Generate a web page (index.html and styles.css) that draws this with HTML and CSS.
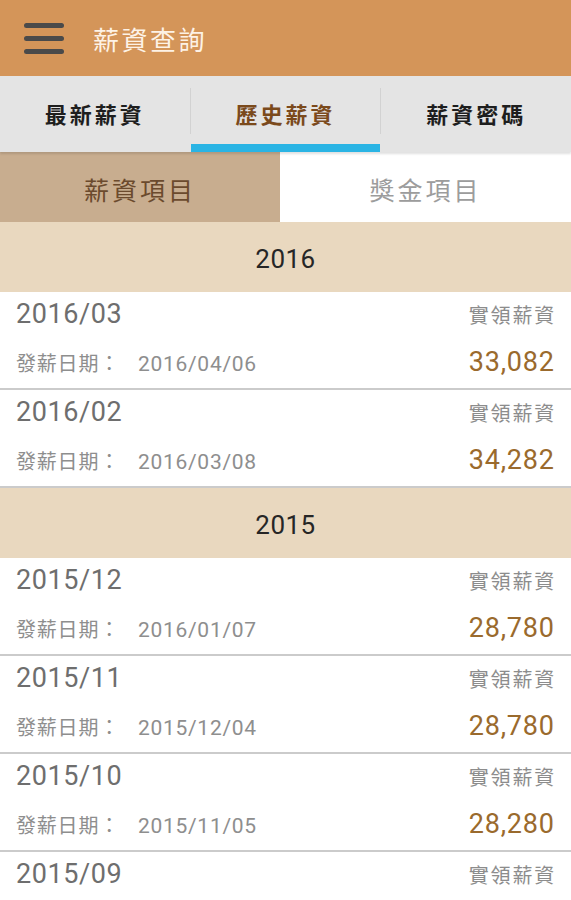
FILE: index.html
```html
<!DOCTYPE html>
<html lang="zh-Hant">
<head>
<meta charset="utf-8">
<title>薪資查詢</title>
<link rel="stylesheet" href="styles.css">
</head>
<body>
<div class="app">
  <header class="appbar">
    <svg class="menu" width="40" height="34" viewBox="0 0 40 34" aria-hidden="true">
      <rect x="0" y="2" width="40" height="5" rx="2.5" fill="#4a4a4a"/>
      <rect x="0" y="15" width="40" height="5" rx="2.5" fill="#4a4a4a"/>
      <rect x="0" y="28" width="40" height="5" rx="2.5" fill="#4a4a4a"/>
    </svg>
    <h1 class="title">薪資查詢</h1>
  </header>

  <nav class="tabs">
    <div class="tab">最新薪資</div>
    <div class="sep"></div>
    <div class="tab active">歷史薪資</div>
    <div class="sep"></div>
    <div class="tab">薪資密碼</div>
  </nav>

  <div class="subtabs">
    <div class="subtab on">薪資項目</div>
    <div class="subtab">獎金項目</div>
  </div>

  <div class="list">
    <div class="year">2016</div>
    <div class="row">
      <div class="month">2016/03</div><div class="label">實領薪資</div>
      <div class="paid"><span class="cap">發薪日期：</span>2016/04/06</div><div class="amount">33,082</div>
    </div>
    <div class="row">
      <div class="month">2016/02</div><div class="label">實領薪資</div>
      <div class="paid"><span class="cap">發薪日期：</span>2016/03/08</div><div class="amount">34,282</div>
    </div>

    <div class="year">2015</div>
    <div class="row">
      <div class="month">2015/12</div><div class="label">實領薪資</div>
      <div class="paid"><span class="cap">發薪日期：</span>2016/01/07</div><div class="amount">28,780</div>
    </div>
    <div class="row">
      <div class="month">2015/11</div><div class="label">實領薪資</div>
      <div class="paid"><span class="cap">發薪日期：</span>2015/12/04</div><div class="amount">28,780</div>
    </div>
    <div class="row">
      <div class="month">2015/10</div><div class="label">實領薪資</div>
      <div class="paid"><span class="cap">發薪日期：</span>2015/11/05</div><div class="amount">28,280</div>
    </div>
    <div class="row partial">
      <div class="month">2015/09</div><div class="label">實領薪資</div>
    </div>
  </div>
</div>
</body>
</html>
```

FILE: styles.css
```css
* { box-sizing: border-box; margin: 0; padding: 0; }

html, body {
  width: 571px;
  height: 900px;
  overflow: hidden;
  background: #ffffff;
}

body {
  font-family: Roboto, "Noto Sans CJK TC", "Noto Sans", sans-serif;
}

.app {
  display: flex;
  flex-direction: column;
  width: 571px;
}

/* App bar */
.appbar {
  height: 76px;
  background: #d49559;
  display: flex;
  align-items: center;
  padding-left: 24px;
  gap: 29px;
}

.menu { display: block; }

.title {
  font-size: 26px;
  font-weight: 400;
  letter-spacing: 2.5px;
  color: #fdf2e6;
}

/* Top tabs */
.tabs {
  height: 76px;
  background: #e4e4e4;
  display: flex;
  align-items: stretch;
  position: relative;
  z-index: 2;
  box-shadow: 0 2px 2px rgba(0, 0, 0, 0.12);
}

.tab {
  flex: 1;
  display: flex;
  align-items: center;
  justify-content: center;
  padding-top: 6px;
  border-bottom: 8px solid transparent;
  font-size: 22px;
  font-weight: 700;
  letter-spacing: 3px;
  color: #1e1e1e;
}

.tab.active {
  color: #7b4a1c;
  border-bottom-color: #2ab4e4;
}

.sep {
  width: 1px;
  align-self: center;
  height: 46px;
  margin-top: -6px;
  background: #d2d2d2;
}

/* Sub tabs */
.subtabs {
  display: grid;
  grid-template-columns: 280px 1fr;
  height: 70px;
}

.subtab {
  display: flex;
  align-items: center;
  justify-content: center;
  padding-top: 4px;
  font-size: 25px;
  letter-spacing: 3px;
  color: #9c9c9c;
  background: #ffffff;
}

.subtab.on {
  background: #c8ad8f;
  color: #6b4a2d;
}

/* List */
.year {
  height: 70px;
  background: #e9d8bf;
  display: flex;
  align-items: center;
  justify-content: center;
  padding-top: 4px;
  font-size: 26px;
  letter-spacing: 0.5px;
  color: #262626;
}

.row {
  height: 98px;
  background: #ffffff;
  border-bottom: 2px solid #cbcbcb;
  display: grid;
  grid-template-columns: 1fr auto;
  grid-template-rows: 44px 52px;
  padding: 0 17px 0 16px;
  align-items: center;
}

.row.partial {
  height: 48px;
  border-bottom: 0;
  grid-template-rows: 44px;
}

.month {
  font-size: 27px;
  letter-spacing: 0.6px;
  color: #6e6e6e;
}

.label {
  font-size: 20px;
  letter-spacing: 1.8px;
  color: #8c8c8c;
  margin-right: -2px;
}

.paid {
  font-size: 21px;
  letter-spacing: 0.7px;
  color: #8e8e8e;
}

.cap {
  font-size: 20px;
  letter-spacing: 0.8px;
  margin-right: 18px;
}

.amount {
  font-size: 27px;
  letter-spacing: 0.8px;
  color: #9a6a2d;
  margin-right: -1px;
}
```
